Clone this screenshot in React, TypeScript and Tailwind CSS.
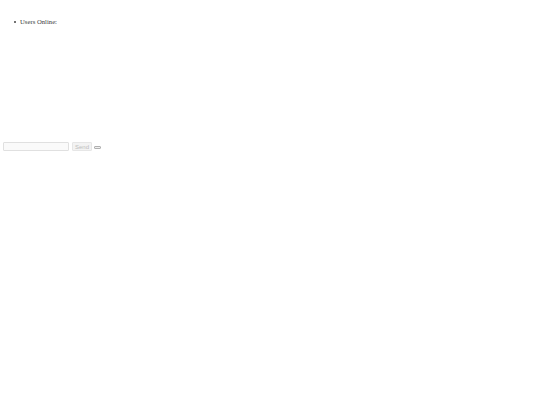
export default function App() {
  return (
    <div className="w-[540px] h-[405px] bg-white font-['Liberation_Serif',serif] text-[#3a3a3a]">
      <ul className="pl-[14px] pt-[18px] text-[6.7px] leading-[8px]">
        <li className="flex items-center gap-[4px]">
          <span className="w-[2px] h-[2px] rounded-full bg-[#444]" />
          <span>Users Online:</span>
        </li>
      </ul>
      <div className="mt-[116px] ml-[3px] flex items-center">
        <input className="w-[66px] h-[9px] border border-[#e0e0e0] bg-[#fafafa] rounded-[1px]" />
        <button className="ml-[3px] w-[20px] h-[9px] border border-[#e6e6e6] bg-[#f3f3f3] text-[#bdbdbd] text-[6px] font-['Liberation_Sans',sans-serif] leading-none rounded-[1px]">
          Send
        </button>
        <button className="ml-[2px] w-[7px] h-[3px] mt-[2px] border border-[#b0b0b0] bg-[#efefef] rounded-[1px]" />
      </div>
    </div>
  );
}
